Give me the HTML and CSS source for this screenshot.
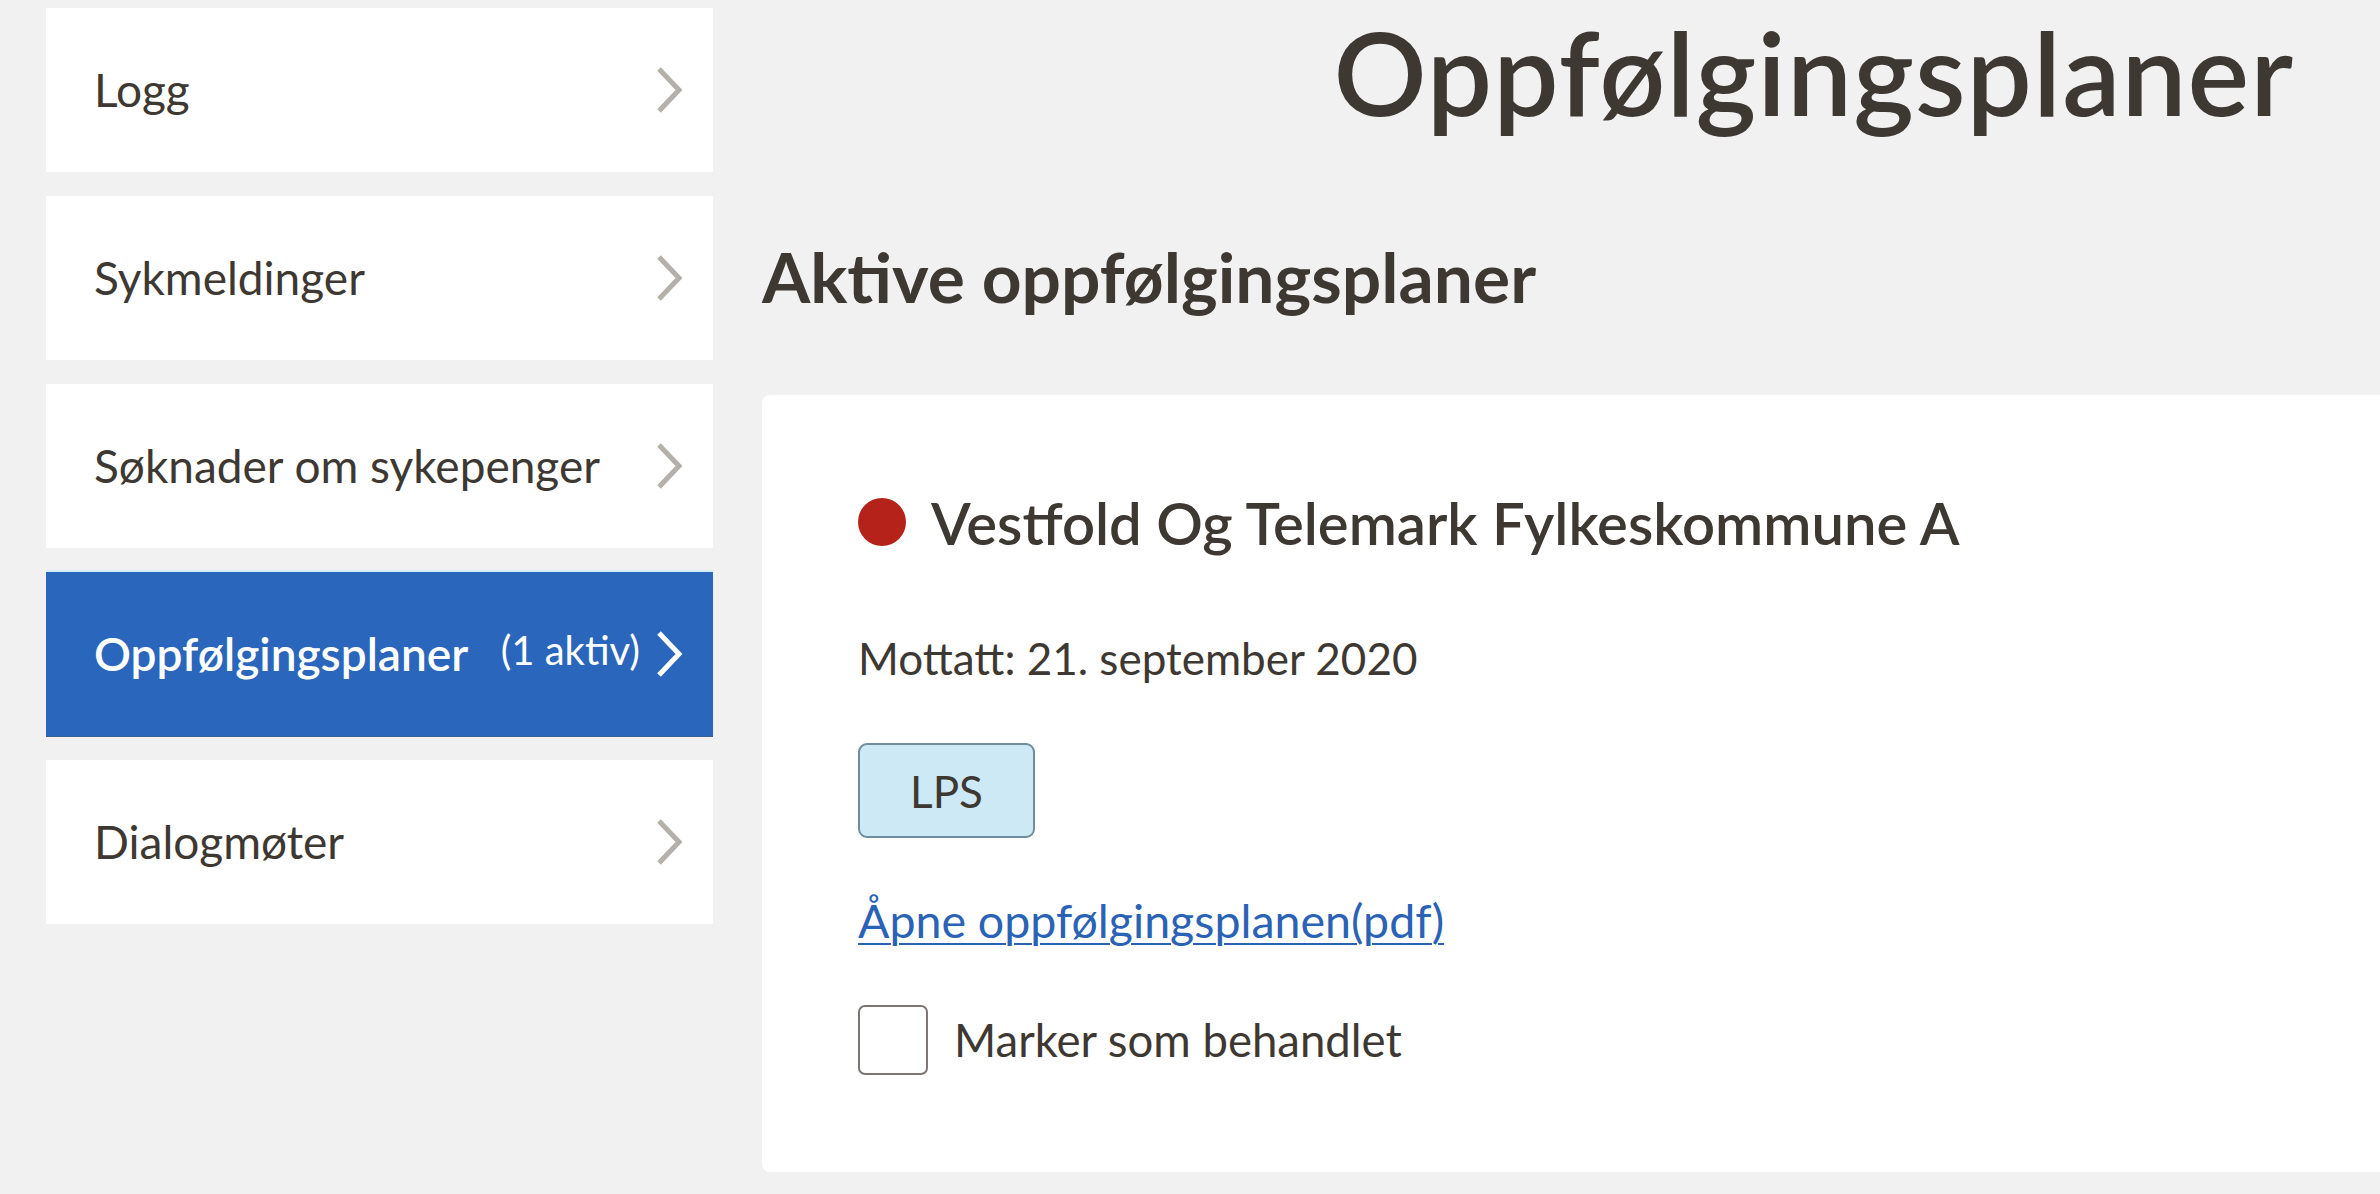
FILE: index.html
```html
<!DOCTYPE html>
<html lang="no">
<head>
<meta charset="utf-8">
<title>Oppfølgingsplaner</title>
<link rel="stylesheet" href="styles.css">
</head>
<body>
<div class="page">
  <nav class="sidebar">
    <a class="navcard" href="#"><span class="navlabel">Logg</span><svg class="chev" viewBox="0 0 26 46"><polyline points="2,2 22,23 2,44"/></svg></a>
    <a class="navcard" href="#"><span class="navlabel">Sykmeldinger</span><svg class="chev" viewBox="0 0 26 46"><polyline points="2,2 22,23 2,44"/></svg></a>
    <a class="navcard" href="#"><span class="navlabel">Søknader om sykepenger</span><svg class="chev" viewBox="0 0 26 46"><polyline points="2,2 22,23 2,44"/></svg></a>
    <a class="navcard active" href="#"><span class="navlabel">Oppfølgingsplaner</span><span class="count">(1 aktiv)</span><svg class="chev" viewBox="0 0 26 46"><polyline points="2,2 22,23 2,44"/></svg></a>
    <a class="navcard" href="#"><span class="navlabel">Dialogmøter</span><svg class="chev" viewBox="0 0 26 46"><polyline points="2,2 22,23 2,44"/></svg></a>
  </nav>
  <main class="main">
    <h1 class="title">Oppfølgingsplaner</h1>
    <h2 class="subtitle">Aktive oppfølgingsplaner</h2>
    <section class="plan">
      <div class="plan-head">
        <span class="dot"></span>
        <h3 class="plan-name">Vestfold Og Telemark Fylkeskommune A</h3>
      </div>
      <p class="received">Mottatt: 21. september 2020</p>
      <div class="tagrow"><span class="tag">LPS</span></div>
      <p class="pdfrow"><a class="pdf" href="#">Åpne oppfølgingsplanen(pdf)</a></p>
      <label class="check"><span class="box"></span><span class="check-label">Marker som behandlet</span></label>
    </section>
  </main>
</div>
</body>
</html>
```
FILE: styles.css
```css
html, body {
  margin: 0;
  padding: 0;
}
body {
  background: #f1f1f1;
  font-family: "Lato", "Liberation Sans", sans-serif;
  color: #3e3832;
  overflow: hidden;
}
.page {
  display: flex;
  align-items: flex-start;
  gap: 49px;
  padding-left: 46px;
}
.sidebar {
  flex: 0 0 667px;
  display: flex;
  flex-direction: column;
  gap: 24px;
  margin-top: 8px;
}
.navcard {
  height: 164px;
  box-sizing: border-box;
  background: #ffffff;
  display: flex;
  align-items: center;
  padding: 0 30px 0 48px;
  text-decoration: none;
  color: #3e3832;
  font-size: 46px;
  line-height: 1.2;
}
.navlabel {
  flex: 1 1 auto;
}
.chev {
  width: 26px;
  height: 46px;
  flex: 0 0 26px;
}
.chev polyline {
  fill: none;
  stroke: #b4b1ab;
  stroke-width: 5;
}
.navcard.active {
  background: #2a66bb;
  color: #ffffff;
  box-shadow: 0 -2px 0 #d4ecf6, 0 1px 0 #3a5f92;
}
.navcard.active .navlabel {
  font-weight: 600;
}
.navcard.active .chev polyline {
  stroke: #ffffff;
}
.count {
  font-size: 40px;
  margin-right: 17px;
  margin-bottom: 8px;
}
.main {
  flex: 1 1 auto;
  min-width: 0;
}
.title {
  margin: 2px 0 0;
  padding-right: 86px;
  font-size: 116px;
  line-height: 1.2;
  font-weight: 600;
  letter-spacing: 1px;
  text-align: right;
  color: #3e3832;
}
.subtitle {
  margin: 94px 0 0;
  font-size: 69.5px;
  line-height: 1.2;
  font-weight: 700;
  color: #3e3832;
}
.plan {
  margin-top: 76px;
  background: #ffffff;
  border-radius: 8px 0 0 8px;
  padding: 95px 96px 97px;
}
.plan-head {
  display: flex;
  align-items: flex-start;
  gap: 25px;
}
.dot {
  flex: 0 0 48px;
  width: 48px;
  height: 48px;
  border-radius: 50%;
  background: #b52219;
  margin-top: 8px;
}
.plan-name {
  margin: 0;
  font-size: 58px;
  line-height: 1.15;
  font-weight: 600;
  color: #3e3832;
}
.received {
  margin: 76px 0 0;
  font-size: 44px;
  line-height: 1.2;
}
.tagrow {
  margin-top: 58px;
  display: flex;
}
.tag {
  box-sizing: border-box;
  height: 95px;
  width: 177px;
  display: flex;
  align-items: center;
  justify-content: center;
  background: #cde9f5;
  border: 2px solid #6f8d9c;
  border-radius: 9px;
  font-size: 44px;
  color: #3e3832;
}
.pdfrow {
  margin: 55px 0 0;
  font-size: 46.5px;
  line-height: 1.2;
}
.pdf {
  color: #2a62b5;
  text-decoration: underline;
  text-decoration-thickness: 2px;
  text-underline-offset: 5px;
}
.check {
  margin-top: 56px;
  display: flex;
  align-items: center;
  gap: 26px;
}
.box {
  box-sizing: border-box;
  width: 70px;
  height: 70px;
  border: 2px solid #7d7670;
  border-radius: 7px;
  background: #ffffff;
}
.check-label {
  font-size: 45.5px;
  line-height: 1.2;
}
```
